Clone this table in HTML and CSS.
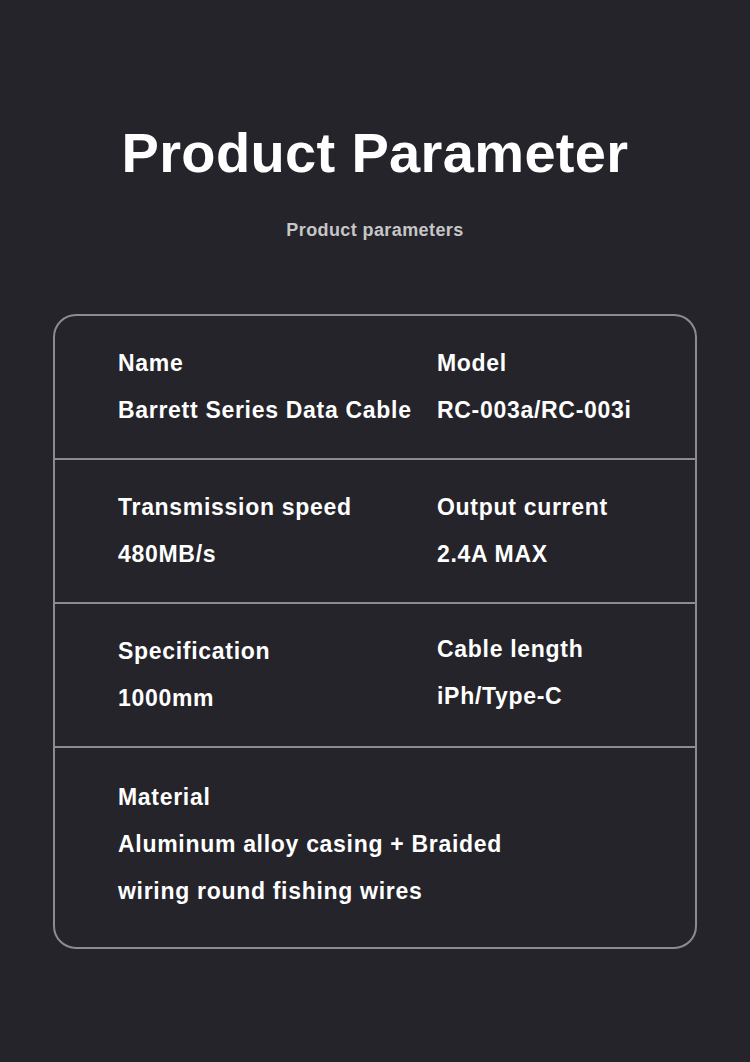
FILE: index.html
```html
<!DOCTYPE html>
<html lang="en">
<head>
    <meta charset="UTF-8">
    <meta name="viewport" content="width=device-width, initial-scale=1.0">
    <title>Product Parameter</title>
    <link rel="stylesheet" href="styles.css">
</head>
<body>
<div class="header">
    <h1>Product Parameter</h1>
    <p>Product parameters</p>
</div>
<div class="param-card">
    <div class="param-row">
        <div class="param">
            <p class="label">Name</p>
            <p class="value">Barrett Series Data Cable</p>
        </div>
        <div class="param">
            <p class="label">Model</p>
            <p class="value">RC-003a/RC-003i</p>
        </div>
    </div>
    <div class="param-row">
        <div class="param">
            <p class="label">Transmission speed</p>
            <p class="value">480MB/s</p>
        </div>
        <div class="param">
            <p class="label">Output current</p>
            <p class="value">2.4A MAX</p>
        </div>
    </div>
    <div class="param-row">
        <div class="param">
            <p class="label">Specification</p>
            <p class="value">1000mm</p>
        </div>
        <div class="param raised">
            <p class="label">Cable length</p>
            <p class="value">iPh/Type-C</p>
        </div>
    </div>
    <div class="param-row single">
        <div class="param">
            <p class="label">Material</p>
            <p class="value">Aluminum alloy casing + Braided<br>wiring round fishing wires</p>
        </div>
    </div>
</div>
</body>
</html>
```

FILE: styles.css
```css
body {
    font-family: "Liberation Sans", Arial, sans-serif;
    background-color: #25242a;
    color: #ffffff;
    margin: 0;
    padding: 0;
    height: 1062px;
}
.header {
    text-align: center;
    padding-top: 121px;
}
.header h1 {
    font-size: 56px;
    line-height: 64px;
    font-weight: bold;
    letter-spacing: 0.35px;
    margin: 0;
}
.header p {
    font-size: 18px;
    line-height: 24px;
    font-weight: bold;
    letter-spacing: 0.4px;
    color: #c6c6c8;
    margin: 33px 0 0;
}
.param-card {
    margin: 72px 53px 0;
    border: 2px solid #8c8c90;
    border-radius: 23px;
}
.param-row {
    display: grid;
    grid-template-columns: 319px 1fr;
    padding: 24px 0 24px 63px;
}
.param-row + .param-row {
    border-top: 2px solid #8c8c90;
}
.param-row.single {
    grid-template-columns: 1fr;
    padding-top: 26px;
    padding-bottom: 32px;
}
.param p {
    margin: 0;
    font-size: 23px;
    line-height: 47px;
    font-weight: bold;
    letter-spacing: 0.7px;
    white-space: nowrap;
}
.raised {
    margin-top: -2px;
}
```
